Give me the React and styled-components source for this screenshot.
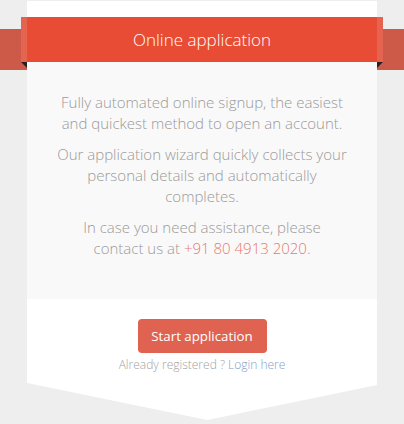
import React from 'react'
import styled, { createGlobalStyle } from 'styled-components'

const GlobalStyle = createGlobalStyle`
  html {
    background: #eeeeee;
  }
  body {
    margin: 0;
    padding: 0;
    font-family: 'Open Sans', 'Liberation Sans', sans-serif;
  }
`

const Page = styled.div`
  width: 404px;
  height: 424px;
  padding-top: 1px;
  box-sizing: border-box;
  overflow: hidden;
  position: relative;
`

const Card = styled.div`
  width: 350px;
  margin: 0 auto;
  border-top: 16px solid #ffffff;
  position: relative;
`

const Ribbon = styled.div`
  position: relative;
  margin: 0 -6px;
  height: 45px;
  background: #e84c34;
  border-left: 6px solid #e5644f;
  border-right: 6px solid #e5644f;
  display: flex;
  align-items: center;
  justify-content: center;

  /* the ribbon ends running off to the page edges */
  &::before {
    content: '';
    position: absolute;
    top: 12px;
    left: -33px;
    right: -33px;
    height: 41px;
    background: #cd5a48;
    z-index: -1;
  }
`

const Fold = styled.span`
  position: absolute;
  top: 45px;
  ${p => (p.$side === 'left' ? 'left: -6px;' : 'right: -6px;')}
  width: 0;
  height: 0;
  border-top: 6px solid #262020;
  ${p =>
    p.$side === 'left'
      ? 'border-left: 6px solid transparent;'
      : 'border-right: 6px solid transparent;'}
`

const Title = styled.h2`
  margin: 0 0 1px;
  color: #ffffff;
  font-size: 17px;
  font-weight: 300;
`

const Body = styled.div`
  background: #f9f9f9;
  padding: 30px 29.5px;
  text-align: center;
`

const Para = styled.p`
  margin: 0 0 10px;
  color: #9a9a9a;
  font-size: 15px;
  font-weight: 300;
  line-height: 21px;
`

const Phone = styled.span`
  color: #e97a70;
`

const Footer = styled.div`
  background: #ffffff;
  padding: 20px 0 47px;
  display: flex;
  flex-direction: column;
  align-items: center;
  gap: 3px;
  clip-path: polygon(0 0, 100% 0, 100% calc(100% - 35px), 51.5% 100%, 0 calc(100% - 37px));
`

const Button = styled.button`
  width: 129px;
  height: 34px;
  border: 0;
  border-radius: 4px;
  background: #e06250;
  color: #ffffff;
  font-family: inherit;
  font-size: 13.3px;
  font-weight: 400;
  cursor: pointer;
`

const Small = styled.div`
  color: #a3a3a3;
  font-size: 12px;
  font-weight: 300;
  line-height: 17px;

  a {
    color: #7f9ec9;
    text-decoration: none;
  }
`

const App = () => {
  return (
    <Page>
      <GlobalStyle />
      <Card>
        <Ribbon>
          <Title>Online application</Title>
          <Fold $side="left" />
          <Fold $side="right" />
        </Ribbon>
        <Body>
          <Para>Fully automated online signup, the easiest and quickest method to open an account.</Para>
          <Para>Our application wizard quickly collects your personal details and automatically completes.</Para>
          <Para>
            In case you need assistance, please contact us at <Phone>+91 80 4913 2020</Phone>.
          </Para>
        </Body>
        <Footer>
          <Button>Start application</Button>
          <Small>
            Already registered ? <a href="#">Login here</a>
          </Small>
        </Footer>
      </Card>
    </Page>
  )
}

export default App
